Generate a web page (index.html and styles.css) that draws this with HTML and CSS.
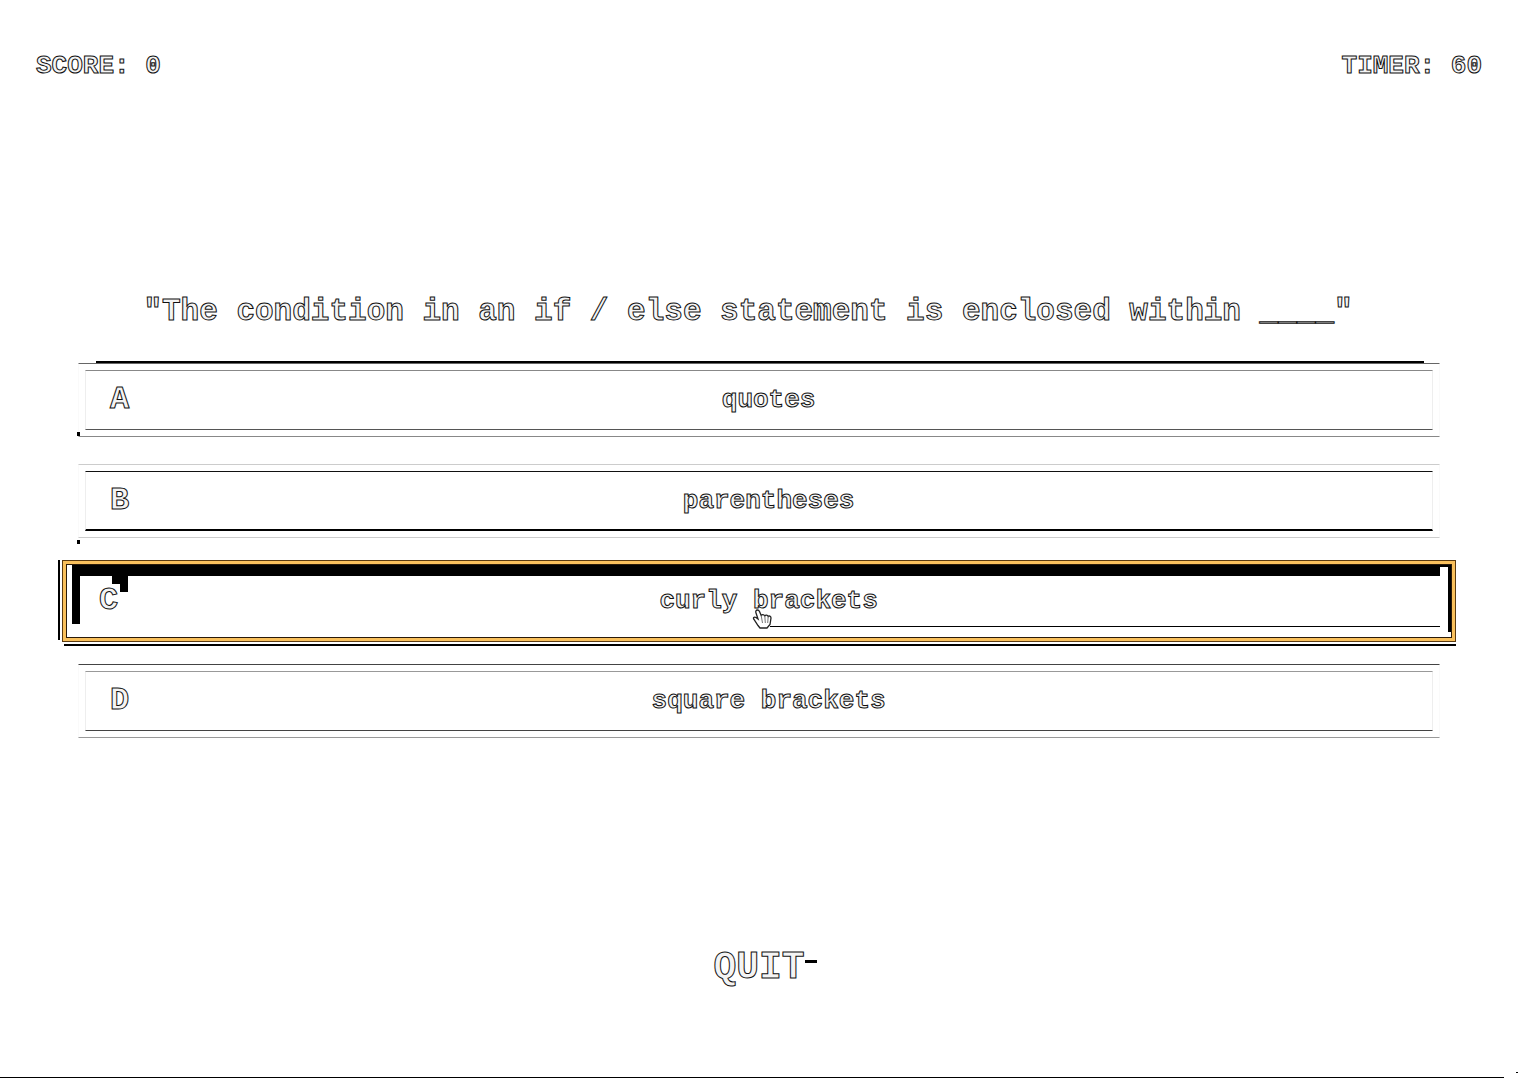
FILE: index.html
```html
<!DOCTYPE html>
<html lang="en">
<head>
<meta charset="utf-8">
<title>Quiz</title>
<link rel="stylesheet" href="styles.css">
</head>
<body>
<header class="status">
  <span>SCORE: 0</span>
  <span>TIMER: 60</span>
</header>
<main class="quiz">
  <h1 class="question">"The condition in an if / else statement is enclosed within ____"</h1>
  <div class="options">
    <button class="option option-a" type="button"><span class="inner"><span class="letter">A</span><span class="answer">quotes</span></span></button>
    <button class="option option-b" type="button"><span class="inner"><span class="letter">B</span><span class="answer">parentheses</span></span></button>
    <button class="option option-active" type="button"><span class="letter">C</span><span class="answer">curly brackets</span>
      <svg class="pointer" width="20" height="20" viewBox="0 0 20 20" aria-hidden="true"><path d="M5.500 1C3.800 1 3.500 2.500 4 4L6 10L4 8.500C2 7.500 .8 9 2 10.500L6 16.500L8 19H15L18 15.500L19 9C19 7 17 6.500 16.200 7.500C15.500 5.800 13.600 5.600 12.800 6.800C11.800 5.400 10 5.400 9.200 6.500L7.500 2.500C7 1.400 6.300 1 5.500 1Z" fill="#fff" stroke="#222" stroke-width="1.300"/><path d="M9.200 6.500L10.500 14M12.800 6.800L13.300 14M16.200 7.500L15.700 14" fill="none" stroke="#777"/></svg>
    </button>
    <button class="option option-d" type="button"><span class="inner"><span class="letter">D</span><span class="answer">square brackets</span></span></button>
  </div>
</main>
<footer class="footer">
  <button class="quit" type="button">QUIT</button>
</footer>
</body>
</html>
```
FILE: styles.css
```css
* { box-sizing: border-box; }

body {
  margin: 0;
  min-height: 100vh;
  display: flex;
  flex-direction: column;
  background: linear-gradient(#000, #000) left bottom 2px / calc(100% - 14px) 1px no-repeat,
    linear-gradient(#000, #000) right bottom 7px / 2px 1px no-repeat, #fff;
  color: #f4f4f4;
  font-family: "Liberation Mono", monospace;
  font-weight: 700;
  font-size: 26px;
  line-height: 32px;
  -webkit-text-stroke: 1px #111;
}

button {
  font: inherit;
  color: inherit;
  -webkit-text-stroke: inherit;
  background: none;
  border: 0;
  padding: 0;
  cursor: pointer;
}

.status {
  display: flex;
  justify-content: space-between;
  padding: 50px 36px 0;
}

.quiz {
  flex: 1;
  padding: 212px 78px 0;
}

.question {
  margin: 0 22px 33px 0;
  font-size: 31px;
  line-height: 36px;
  text-align: center;
}

.options {
  display: flex;
  flex-direction: column;
  gap: 27px;
}

.option {
  position: relative;
  display: flex;
  height: 74px;
  padding: 6px;
  border: 1px solid #fafafa;
}

.inner {
  flex: 1;
  display: flex;
  align-items: center;
  padding: 0 24px;
  border: 1px solid #eee;
}

.letter { font-size: 32px; }
.answer { flex: 1; text-align: center; }

.option-a { border-top-color: #666; border-bottom-color: #888; }
.option-a .inner { border-top-color: #888; border-bottom-color: #555; }
.option-a::before {
  content: "";
  position: absolute;
  inset: -3px 15px auto 17px;
  height: 2px;
  background: #000;
}

.option-b { border-top-color: #ccc; border-bottom-color: #ccc; }
.option-b .inner { border-top-color: #111; border-bottom: 2px solid #000; }

.option-d { border-top-color: #444; border-bottom-color: #999; }
.option-d .inner { border-top-color: #999; border-bottom-color: #444; }

.option-a::after,
.option-b::after {
  content: "";
  position: absolute;
  left: -2px;
  bottom: 0;
  width: 3px;
  height: 4px;
  background: #000;
}
.option-b::after { bottom: -7px; }

.option-active {
  --ink: linear-gradient(#000, #000);
  align-items: center;
  height: 82px;
  margin: -5px -16px;
  padding: 0 36px;
  border: 1px solid #5a3a10;
  box-shadow: inset 0 0 0 3px #f9c05c, inset 0 0 0 4px #2a1a08;
  background:
    var(--ink) left 9px top 4px / calc(100% - 24px) 11px no-repeat,
    var(--ink) left 9px top 15px / 8px 48px no-repeat,
    var(--ink) left 49px top 15px / 16px 8px no-repeat,
    var(--ink) left 57px top 23px / 8px 8px no-repeat,
    var(--ink) right 3px top 4px / 16px 2px no-repeat,
    var(--ink) right 3px top 4px / 4px 67px no-repeat,
    var(--ink) right 15px top 65px / calc(50% - 26px) 1px no-repeat,
    #fff;
}
.option-active::before {
  content: "";
  position: absolute;
  inset: -1px -1px -5px -5px;
  background:
    linear-gradient(#000, #000) left top / 2px calc(100% - 6px) no-repeat,
    linear-gradient(#000, #000) right bottom / calc(100% - 6px) 2px no-repeat;
}

.pointer {
  position: absolute;
  left: calc(50% - 7px);
  bottom: 12px;
}

.footer {
  display: flex;
  justify-content: center;
  padding-bottom: 92px;
}

.quit {
  position: relative;
  font-size: 38px;
  line-height: 40px;
}
.quit::after {
  content: "";
  position: absolute;
  left: 100%;
  top: 12px;
  width: 12px;
  height: 3px;
  background: #000;
}
```
